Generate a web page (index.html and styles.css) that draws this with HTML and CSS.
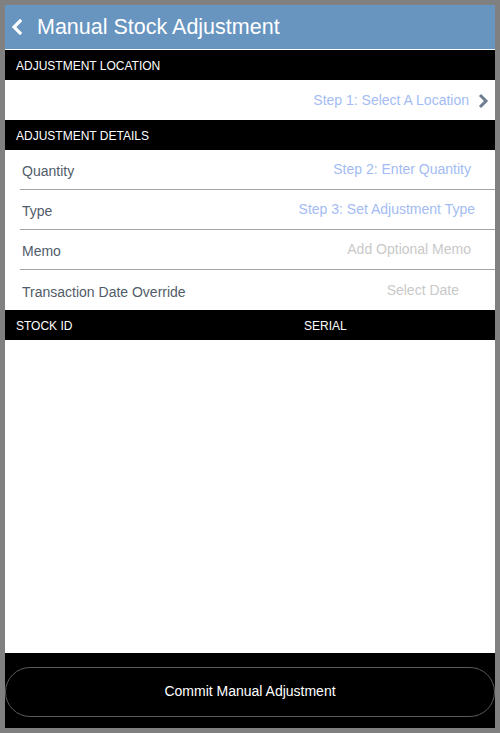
FILE: index.html
```html
<!DOCTYPE html>
<html>
<head>
<meta charset="utf-8">
<link rel="stylesheet" href="styles.css">
</head>
<body>
<div class="app">
  <header class="topbar">
    <svg class="back" width="14" height="16" viewBox="0 0 14 16"><path d="M10 2 L4 8 L10 14" fill="none" stroke="#fff" stroke-width="3.2" stroke-linecap="square"/></svg>
    <h1 class="title">Manual Stock Adjustment</h1>
  </header>
  <div class="section">ADJUSTMENT LOCATION</div>
  <div class="loc-row">
    <span class="value step">Step 1: Select A Location</span>
    <svg class="chev" width="12" height="16" viewBox="0 0 12 16"><path d="M3 2 L9 8 L3 14" fill="none" stroke="#6e7e8e" stroke-width="3"/></svg>
  </div>
  <div class="section">ADJUSTMENT DETAILS</div>
  <div class="details">
    <div class="row"><span class="label">Quantity</span><span class="value step pad-q">Step 2: Enter Quantity</span></div>
    <div class="row"><span class="label">Type</span><span class="value step pad-t">Step 3: Set Adjustment Type</span></div>
    <div class="row"><span class="label">Memo</span><span class="value hint pad-q">Add Optional Memo</span></div>
    <div class="row last"><span class="label">Transaction Date Override</span><span class="value hint pad-d">Select Date</span></div>
  </div>
  <div class="section grid-head"><span>STOCK ID</span><span>SERIAL</span></div>
  <div class="list"></div>
  <footer class="footer">
    <button class="commit">Commit Manual Adjustment</button>
  </footer>
</div>
</body>
</html>
```

FILE: styles.css
```css
html, body {
  margin: 0;
  padding: 0;
  background: #808080;
}
body {
  font-family: "Liberation Sans", Arial, sans-serif;
}
.app {
  margin: 5px;
  height: 723px;
  background: #fff;
  display: flex;
  flex-direction: column;
  overflow: hidden;
}
.topbar {
  height: 44px;
  background: #6795bf;
  border-bottom: 1px solid #fff;
  display: flex;
  align-items: center;
  flex-shrink: 0;
}
.back {
  margin-left: 5px;
  margin-top: 0;
}
.title {
  margin: 2px 0 0 13px;
  font-size: 21.5px;
  font-weight: normal;
  color: #fff;
  line-height: 1;
}
.section {
  height: 30px;
  background: #000;
  color: #fff;
  font-size: 12px;
  display: flex;
  align-items: center;
  padding-left: 11px;
  padding-top: 1px;
  box-sizing: border-box;
  flex-shrink: 0;
}
.loc-row {
  height: 40px;
  display: flex;
  align-items: center;
  justify-content: flex-end;
  padding-right: 6px;
  flex-shrink: 0;
}
.loc-row .value {
  margin-right: 8px;
}
.chev {
  margin-top: 1px;
}
.details {
  padding-left: 15px;
  flex-shrink: 0;
}
.row {
  height: 39px;
  border-bottom: 1px solid #a0a4a8;
  display: flex;
  align-items: center;
  justify-content: space-between;
  padding-left: 2px;
}
.row.last {
  border-bottom: none;
  height: 40px;
}
.label {
  font-size: 14px;
  color: #515c6a;
  margin-top: 3px;
}
.value {
  font-size: 14px;
}
.step {
  color: #a3bcf3;
}
.hint {
  color: #c9c9c9;
}
.pad-q { margin-right: 24px; }
.pad-t { margin-right: 20px; }
.pad-d { margin-right: 36px; }
.row .value { margin-top: -1px; }
.grid-head {
  display: grid;
  grid-template-columns: 288px 1fr;
  align-items: center;
}
.list {
  flex: 1;
  background: #fff;
}
.footer {
  height: 75px;
  background: #000;
  flex-shrink: 0;
  padding-top: 15px;
  box-sizing: border-box;
}
.commit {
  display: block;
  width: 100%;
  height: 50px;
  background: #000;
  color: #fff;
  border: 1px solid #5a5a5a;
  border-radius: 25px;
  font-family: "Liberation Sans", Arial, sans-serif;
  font-size: 14px;
  padding: 0 0 2px 0;
  margin-top: -1px;
}
```
